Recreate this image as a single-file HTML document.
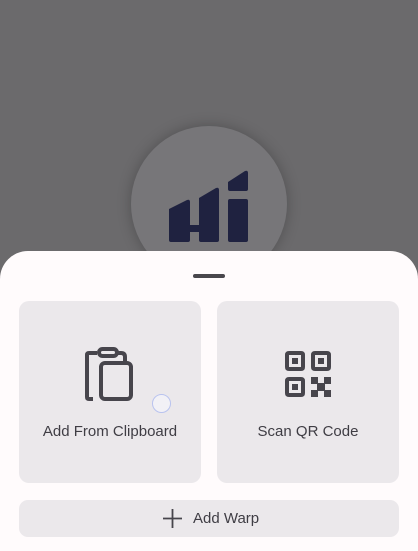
<!DOCTYPE html>
<html><head><style>
*{margin:0;padding:0;box-sizing:border-box}
body{width:418px;height:541px;overflow:hidden;background:#6b6a6c;position:relative;font-family:"Liberation Sans",sans-serif}
.circ{position:absolute;left:131px;top:126px;width:156px;height:156px;border-radius:50%;background:#777679;box-shadow:0 0 14px rgba(0,0,0,.25)}
.sheet{position:absolute;left:0;top:251px;width:418px;height:300px;background:#fffbfc;border-radius:28px 28px 0 0}
.handle{position:absolute;left:193px;top:274px;width:32px;height:4px;border-radius:2px;background:#49474c}
.card{position:absolute;top:301px;width:182px;height:182px;background:#ebe8eb;border-radius:10px}
.lbl{position:absolute;left:0;right:0;top:122px;text-align:center;font-size:15px;color:#3f3d44}
.btn{position:absolute;left:19px;top:500px;width:380px;height:37px;background:#ebe8eb;border-radius:9px;font-size:15px;color:#3f3d44}
</style></head><body>
<div class="circ"></div>
<svg style="position:absolute;left:0;top:0" width="418" height="260">
<g fill="#1f2240">
<path d="M169 209 L187 200 Q190 199 190 202 V240 Q190 242 188 242 H171 Q169 242 169 240 Z"/>
<rect x="188" y="225" width="13" height="7"/>
<path d="M199 198 L216 188 Q219 187 219 190 V240 Q219 242 217 242 H201 Q199 242 199 240 Z"/>
<path d="M228 182 L245 171 Q248 170 248 173 V189 Q248 191 246 191 H230 Q228 191 228 189 Z"/>
<rect x="228" y="199" width="20" height="43" rx="2"/>
</g>
</svg>
<div class="sheet"></div>
<div class="handle"></div>
<div class="card" style="left:19px">
<svg style="position:absolute;left:66px;top:46px" width="50" height="54" viewBox="0 0 50 54" fill="none" stroke="#47454c" stroke-width="4">
<path d="M12 6 H4 Q2 6 2 8 V50 Q2 52 4 52 H8"/>
<path d="M32 6 H36 Q40 6 40 10 V14"/>
<rect x="14" y="2" width="18" height="7" rx="3.5"/>
<rect x="16" y="16" width="30" height="36" rx="4"/>
</svg>
<div style="position:absolute;left:133px;top:93px;width:19px;height:19px;border-radius:50%;border:1.5px solid #b9c3ef;background:#f2f1f6"></div>
<div class="lbl">Add From Clipboard</div>
</div>
<div class="card" style="left:217px">
<svg style="position:absolute;left:68px;top:50px" width="46" height="46" viewBox="0 0 46 46" fill="#47454c">
<path fill-rule="evenodd" d="M0 4Q0 0 4 0H16Q20 0 20 4V16Q20 20 16 20H4Q0 20 0 16ZM4 4V16H16V4Z"/>
<rect x="7" y="7" width="6" height="6"/>
<path fill-rule="evenodd" d="M26 4Q26 0 30 0H42Q46 0 46 4V16Q46 20 42 20H30Q26 20 26 16ZM30 4V16H42V4Z"/>
<rect x="33" y="7" width="6" height="6"/>
<path fill-rule="evenodd" d="M0 30Q0 26 4 26H16Q20 26 20 30V42Q20 46 16 46H4Q0 46 0 42ZM4 30V42H16V30Z"/>
<rect x="7" y="33" width="6" height="6"/>
<rect x="26" y="26" width="7" height="7"/><rect x="39" y="26" width="7" height="7"/>
<rect x="32" y="32" width="8" height="8"/>
<rect x="26" y="39" width="7" height="7"/><rect x="39" y="39" width="7" height="7"/>
</svg>
<div class="lbl">Scan QR Code</div>
</div>
<div class="btn">
<svg style="position:absolute;left:144px;top:9px" width="19" height="19" stroke="#47454c" stroke-width="1.8"><path d="M9.5 0V19M0 9.5H19"/></svg>
<span style="position:absolute;left:174px;top:10px">Add Warp</span>
</div>
</body></html>
